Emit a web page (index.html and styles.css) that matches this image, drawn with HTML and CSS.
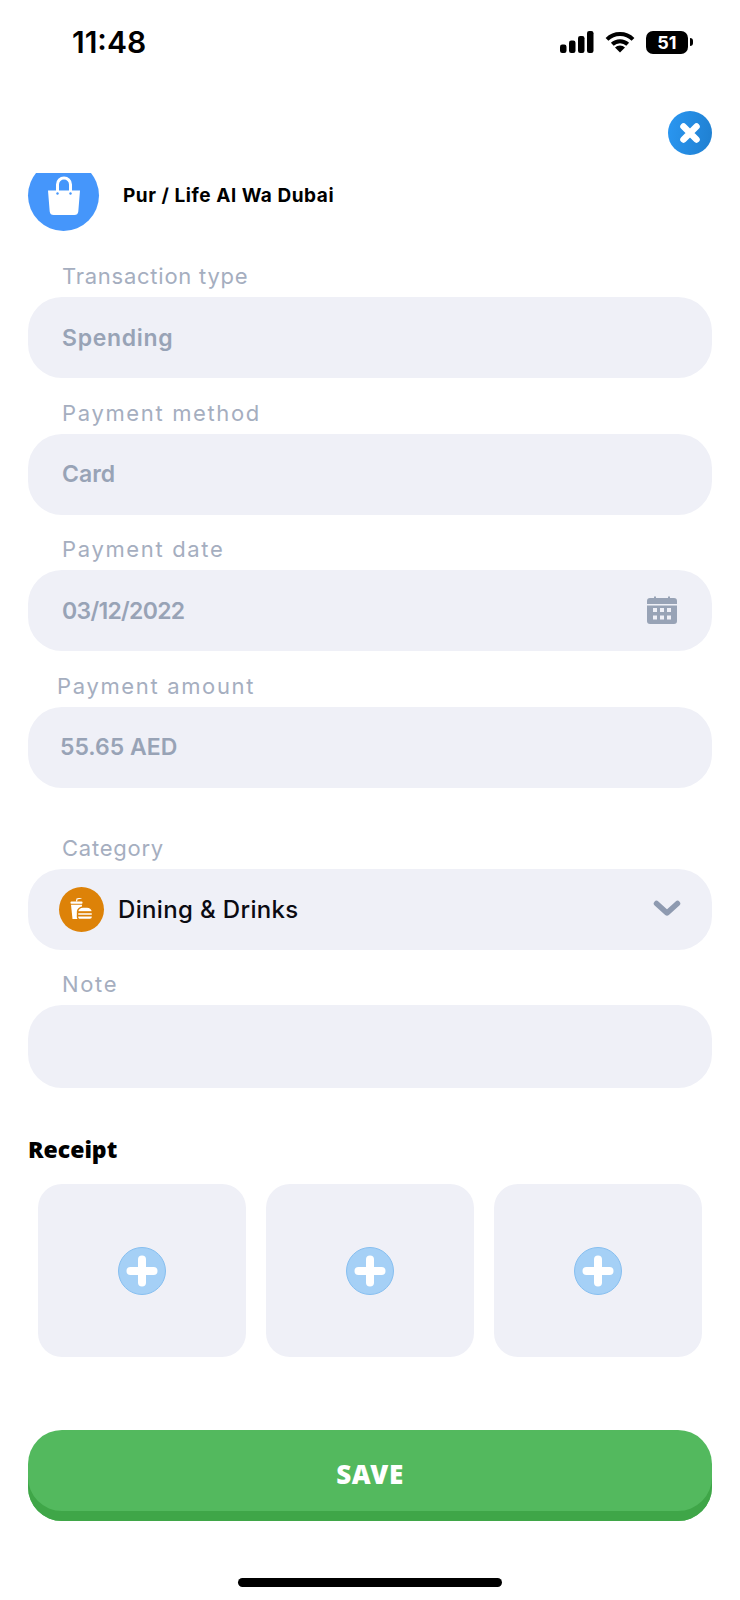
FILE: index.html
```html
<!DOCTYPE html>
<html lang="en">
  <head>
	<meta charset="UTF-8" />
	<meta name="viewport" content="width=device-width, initial-scale=1.0" />
	<title>Edit transaction</title>
	<link rel="stylesheet" href="styles.css">
  </head>
  <body>

	<div class="status-bar">
	  <span class="time">11:48</span>
	  <div class="status-icons">
		<svg class="signal" width="34" height="22" viewBox="0 0 34 22">
		  <rect x="0" y="13.500" width="6.500" height="8.500" rx="2.200" fill="#000"/>
		  <rect x="9" y="9.500" width="6.500" height="12.500" rx="2.200" fill="#000"/>
		  <rect x="18" y="5" width="6.500" height="17" rx="2.200" fill="#000"/>
		  <rect x="27" y="0" width="6.500" height="22" rx="2.200" fill="#000"/>
		</svg>
		<svg class="wifi" width="30" height="22" viewBox="0 0 30 22">
		  <path d="M2 8.300 A18.500 18.500 0 0 1 28 8.300" fill="none" stroke="#000" stroke-width="4"/>
		  <path d="M7.300 13.300 A11 11 0 0 1 22.700 13.300" fill="none" stroke="#000" stroke-width="4"/>
		  <path d="M15 21.500 L10 16.500 A7 7 0 0 1 20 16.500 Z" fill="#000"/>
		</svg>
		<div class="battery"><span>51</span></div>
		<div class="battery-nub"></div>
	  </div>
	</div>

	<div class="close-row">
	  <button class="close-btn">
		<svg width="28" height="28" viewBox="0 0 28 28">
		  <path d="M7.500 7.500 L20.500 20.500 M20.500 7.500 L7.500 20.500" stroke="#fff" stroke-width="6.500" stroke-linecap="round"/>
		</svg>
	  </button>
	</div>

	<div class="merchant">
	  <div class="merchant-inner">
		<div class="merchant-icon">
		  <svg width="34" height="40" viewBox="0 0 34 40">
			<path d="M10.500 16 V8.500 A6.500 6.500 0 0 1 23.500 8.500 V16" fill="none" stroke="#fff" stroke-width="3"/>
			<path d="M1 14.500 H33 L31.300 35.500 A4 4 0 0 1 27.300 39 H6.700 A4 4 0 0 1 2.700 35.500 Z" fill="#fff"/>
			<circle cx="10.500" cy="17.500" r="1.200" fill="#4596fb"/>
			<circle cx="23.500" cy="17.500" r="1.200" fill="#4596fb"/>
		  </svg>
		</div>
		<span class="merchant-name">Pur / Life Al Wa Dubai</span>
	  </div>
	</div>

	<div class="field-group">
	  <div class="field-label">Transaction type</div>
	  <div class="field"><span class="field-value value-wide">Spending</span></div>
	</div>

	<div class="field-group">
	  <div class="field-label label-wide">Payment method</div>
	  <div class="field"><span class="field-value">Card</span></div>
	</div>

	<div class="field-group">
	  <div class="field-label label-wide">Payment date</div>
	  <div class="field field-split">
		<span class="field-value value-digits">03/12/2022</span>
		<svg class="calendar" width="30" height="28" viewBox="0 0 30 28">
		  <path d="M3 2 H7 V0.500 H9 V2 H21 V0.500 H23 V2 H27 A3 3 0 0 1 30 5 V8 H0 V5 A3 3 0 0 1 3 2 Z" fill="#98a3b6"/>
		  <path d="M0 9.500 H30 V25 A3 3 0 0 1 27 28 H3 A3 3 0 0 1 0 25 Z" fill="#98a3b6"/>
		  <g fill="#eff0f7">
			<rect x="6" y="12" width="4" height="4"/>
			<rect x="13" y="12" width="4" height="4"/>
			<rect x="20" y="12" width="4" height="4"/>
			<rect x="6" y="19.500" width="4" height="4"/>
			<rect x="13" y="19.500" width="4" height="4"/>
			<rect x="20" y="19.500" width="4" height="4"/>
		  </g>
		</svg>
	  </div>
	</div>

	<div class="field-group">
	  <div class="field-label label-wide label-amount">Payment amount</div>
	  <div class="field field-amount"><span class="field-value">55.65 AED</span></div>
	</div>

	<div class="field-group group-category">
	  <div class="field-label">Category</div>
	  <div class="field field-category">
		<div class="category-icon">
		  <svg width="23" height="23" viewBox="0 0 23 23">
			<rect x="0.500" y="3.500" width="12" height="2.300" rx="0.800" fill="#fff"/>
			<path d="M6.500 3.500 L7 1 L11.500 0" fill="none" stroke="#fff" stroke-width="1.200"/>
			<path d="M1 6.800 H12 L11.600 21 H2.500 Z" fill="#fff"/>
			<g stroke="#dd8208" stroke-width="1.400">
			  <path d="M7.500 14 A5.500 5 0 0 1 13 9 H17 A5.500 5 0 0 1 22.500 14 Z" fill="#fff"/>
			  <rect x="7.500" y="14.500" width="15" height="3" rx="1" fill="#fff"/>
			  <path d="M7.500 17.800 H22.500 V19 A2.500 2.500 0 0 1 20 21.500 H10 A2.500 2.500 0 0 1 7.500 19 Z" fill="#fff"/>
			</g>
		  </svg>
		</div>
		<span class="category-name">Dining &amp; Drinks</span>
		<svg class="chevron" width="28" height="18" viewBox="0 0 28 18">
		  <path d="M3.500 3.500 L14 13 L24.500 3.500" fill="none" stroke="#8e9ab0" stroke-width="5.500" stroke-linecap="round" stroke-linejoin="round"/>
		</svg>
	  </div>
	</div>

	<div class="field-group">
	  <div class="field-label label-wide">Note</div>
	  <div class="field field-note"></div>
	</div>

	<h2 class="receipt-title">Receipt</h2>
	<div class="receipt-grid">
	  <div class="receipt-card"><div class="plus"></div></div>
	  <div class="receipt-card"><div class="plus"></div></div>
	  <div class="receipt-card"><div class="plus"></div></div>
	</div>

	<button class="save-btn">SAVE</button>

	<div class="home-bar"></div>

  </body>
</html>
```

FILE: styles.css
```css
* {
  box-sizing: border-box;
  margin: 0;
  padding: 0;
}
body {
  font-family: Inter, "Noto Sans", sans-serif;
  background: #fff;
  width: 740px;
  height: 1600px;
  overflow: hidden;
}
.status-bar {
  height: 84px;
  padding: 0 47px 0 72px;
  display: flex;
  align-items: center;
  justify-content: space-between;
}
.time {
  font-family: Inter, sans-serif;
  font-size: 30px;
  font-weight: 600;
  color: #000;
}
.status-icons {
  display: flex;
  align-items: center;
}
.wifi {
  margin-left: 11px;
}
.battery {
  width: 42px;
  height: 23px;
  margin-left: 11px;
  background: #000;
  border-radius: 7px;
  color: #fff;
  font-size: 18px;
  font-weight: 700;
  line-height: 23px;
  text-align: center;
}
.battery-nub {
  width: 3px;
  height: 8px;
  margin-left: 2px;
  background: #000;
  border-radius: 0 3px 3px 0;
}
.close-row {
  display: flex;
  justify-content: flex-end;
  padding: 27px 28px 0 0;
}
.close-btn {
  width: 44px;
  height: 44px;
  border: none;
  border-radius: 50%;
  background: linear-gradient(100deg, #2a97f2, #1f7fd0);
  display: flex;
  align-items: center;
  justify-content: center;
}
.merchant {
  height: 58px;
  margin-top: 18px;
  padding-left: 28px;
  overflow: hidden;
}
.merchant-inner {
  display: flex;
  align-items: center;
  margin-top: -13px;
}
.merchant-icon {
  width: 71px;
  height: 71px;
  border-radius: 50%;
  background: #4596fb;
  display: flex;
  align-items: center;
  justify-content: center;
  flex-shrink: 0;
}
.merchant-name {
  margin-left: 24px;
  font-size: 19px;
  font-weight: 700;
  letter-spacing: 0.55px;
  color: #000;
}
.field-group {
  padding: 0 28px;
  margin-top: 15.5px;
}
.merchant + .field-group {
  margin-top: 26px;
}
.field-label {
  height: 40px;
  line-height: 38px;
  padding-left: 34px;
  font-size: 22px;
  letter-spacing: 0.75px;
  color: #a5aebf;
}
.label-wide {
  letter-spacing: 1.65px;
}
.label-amount {
  padding-left: 29px;
}
.field {
  height: 81px;
  padding: 0 34px;
  background: #eff0f7;
  border-radius: 34px;
  display: flex;
  align-items: center;
}
.field-value {
  font-size: 23px;
  font-weight: 600;
  color: #98a3b6;
}
.value-wide {
  letter-spacing: 0.7px;
}
.value-digits {
  letter-spacing: -0.7px;
}
.field-split {
  justify-content: space-between;
  padding-right: 35px;
}
.calendar {
  margin-bottom: 2px;
}
.field-amount {
  padding-left: 32px;
}
.group-category {
  margin-top: 41px;
}
.field-category {
  padding: 0 31px;
}
.category-icon {
  width: 45px;
  height: 45px;
  border-radius: 50%;
  background: #dd8208;
  display: flex;
  align-items: center;
  justify-content: center;
  flex-shrink: 0;
}
.category-name {
  margin-left: 14px;
  font-size: 24px;
  font-weight: 500;
  letter-spacing: 0.35px;
  color: #0b0b12;
}
.chevron {
  margin-left: auto;
}
.field-note {
  height: 83px;
}
.receipt-title {
  margin: 45px 0 0 28px;
  font-family: "Noto Sans", sans-serif;
  font-size: 23px;
  font-weight: 900;
  line-height: 32px;
  color: #000;
}
.receipt-grid {
  display: grid;
  grid-template-columns: repeat(3, 207.5px);
  gap: 20.5px;
  padding: 0 38px;
  margin-top: 19px;
}
.receipt-card {
  height: 173px;
  background: #eff0f7;
  border-radius: 24px;
  display: flex;
  align-items: center;
  justify-content: center;
}
.plus {
  width: 48px;
  height: 48px;
  border-radius: 50%;
  border: 1px solid #87bff0;
  background: #a5d0f6;
  position: relative;
}
.plus::before,
.plus::after {
  content: "";
  position: absolute;
  left: 50%;
  top: 50%;
  background: #fff;
  border-radius: 4px;
  transform: translate(-50%, -50%);
}
.plus::before {
  width: 31px;
  height: 8px;
}
.plus::after {
  width: 8px;
  height: 31px;
}
.save-btn {
  display: block;
  width: 684px;
  height: 91px;
  margin: 73px 0 0 28px;
  padding-bottom: 4px;
  border: none;
  border-radius: 34px;
  background: #53b95e;
  box-shadow: inset 0 -10px 0 #3fa648;
  color: #fff;
  font-family: "Noto Sans", sans-serif;
  font-size: 26px;
  font-weight: 900;
  letter-spacing: 0.6px;
}
.home-bar {
  width: 264px;
  height: 9px;
  margin: 57px auto 0;
  background: #000;
  border-radius: 5px;
}
```
